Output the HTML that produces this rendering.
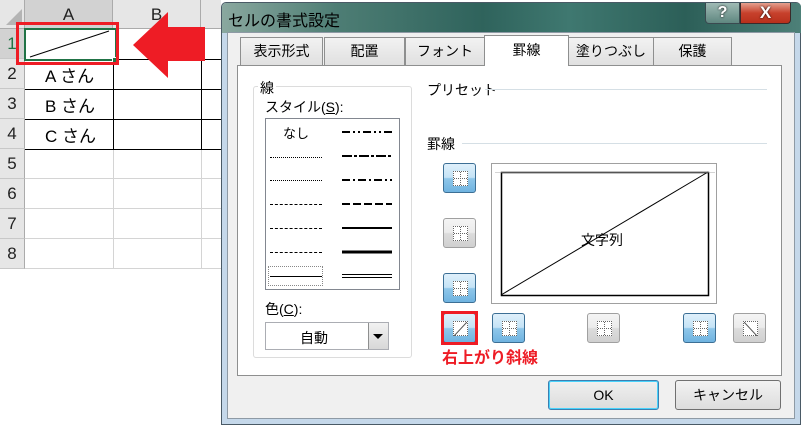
<!DOCTYPE html>
<html><head><meta charset="utf-8"><style>
*{margin:0;padding:0;box-sizing:border-box}
body{width:801px;height:425px;position:relative;overflow:hidden;background:#fff;font-family:"Liberation Sans","Noto Sans CJK JP",sans-serif;color:#000}
.a{position:absolute}
.hl{position:absolute;height:1px;background:#d4d4d4}
.vl{position:absolute;width:1px;background:#d4d4d4}
.rh{position:absolute;left:0;width:25px;height:30px;background:#e6e6e6;border-bottom:1px solid #c8c8c8;border-right:1px solid #ababab;text-align:center;font-size:17px;line-height:30px;color:#222}
.t{position:absolute;font-size:14px}
.tab{position:absolute;top:37px;height:28px;background:linear-gradient(#f2f2f2,#e0e0e0);border:1px solid #8e8f8f;border-bottom:none;font-size:14px;text-align:center;line-height:27px}
.btn{position:absolute;width:33px;height:30px;border:1px solid #3c6f95;border-radius:3px;background:linear-gradient(#dff0fb 0%,#c5e3f6 48%,#8fc7ea 52%,#6fb3e0 100%)}
.btn.g{border-color:#a0a0a0;background:linear-gradient(#f4f4f4 0%,#ebebeb 48%,#dcdcdc 52%,#d0d0d0 100%)}
.btn i{position:absolute;left:9px;top:7px;width:15px;height:15px;border:1px dotted #666;background:#fff}
.btn i::before{content:"";position:absolute;left:6px;top:0;height:13px;border-left:1px dotted #666}
.btn i::after{content:"";position:absolute;top:6px;left:0;width:13px;border-top:1px dotted #666}
.btn i.n::before,.btn i.n::after{display:none}
.ls{position:absolute;height:0}
</style></head><body>
<div class="a" style="left:0;top:0;width:221px;height:29px;background:#e6e6e6;border-bottom:1px solid #ababab"></div>
<div class="a" style="left:0;top:0;width:25px;height:29px;border-right:1px solid #ababab"></div>
<svg class="a" style="left:6px;top:9px" width="16" height="16"><polygon points="16,0 16,16 0,16" fill="#b4b4b4"/></svg>
<div class="a" style="left:25px;top:0;width:88px;height:29px;background:#d2d2d2;border-right:1px solid #ababab;text-align:center;font-size:17px;line-height:30px;color:#222">A</div>
<div class="a" style="left:113px;top:0;width:88px;height:29px;border-right:1px solid #ababab;text-align:center;font-size:17px;line-height:30px;color:#222">B</div>
<div class="rh" style="top:29px;background:#d2d2d2;color:#217346">1</div>
<div class="rh" style="top:59px">2</div><div class="rh" style="top:89px">3</div><div class="rh" style="top:119px">4</div>
<div class="rh" style="top:149px">5</div><div class="rh" style="top:179px">6</div><div class="rh" style="top:209px">7</div><div class="rh" style="top:239px">8</div>
<div class="hl" style="left:25px;top:178px;width:196px"></div>
<div class="hl" style="left:25px;top:208px;width:196px"></div>
<div class="hl" style="left:25px;top:238px;width:196px"></div>
<div class="hl" style="left:25px;top:268px;width:196px"></div>
<div class="vl" style="left:113px;top:149px;height:120px"></div>
<div class="vl" style="left:201px;top:149px;height:120px"></div>
<div class="vl" style="left:201px;top:29px;height:30px"></div>
<div class="a" style="left:25px;top:59px;width:196px;height:91px;border-top:1px solid #000;border-bottom:1px solid #000"></div>
<div class="a" style="left:25px;top:89px;width:196px;height:1px;background:#000"></div>
<div class="a" style="left:25px;top:119px;width:196px;height:1px;background:#000"></div>
<div class="a" style="left:113px;top:59px;width:1px;height:91px;background:#000"></div>
<div class="a" style="left:201px;top:59px;width:1px;height:91px;background:#000"></div>
<div class="t" style="left:45px;top:62px;font-size:17px">A さん</div>
<div class="t" style="left:45px;top:92px;font-size:17px">B さん</div>
<div class="t" style="left:45px;top:122px;font-size:17px">C さん</div>
<svg class="a" style="left:25px;top:29px" width="91" height="32"><line x1="5" y1="28" x2="84" y2="2" stroke="#000" stroke-width="1"/></svg>
<div class="a" style="left:24px;top:28px;width:93px;height:33px;border:2px solid #217346"></div>
<div class="a" style="left:112px;top:57px;width:6px;height:6px;background:#217346;border:1px solid #fff"></div>
<div class="a" style="left:16px;top:22px;width:103px;height:43px;border:3px solid #ee1c25"></div>
<svg class="a" style="left:133px;top:12px" width="72" height="67"><polygon points="0,33 35,0 35,15 72,15 72,49 35,49 35,66" fill="#ee1c25"/></svg>
<div class="a" style="left:221px;top:2px;width:580px;height:423px;background:#c5d8ea;border:1px solid #4a5a66;border-radius:5px 5px 0 0"></div>
<div class="a" style="left:222px;top:3px;width:579px;height:30px;background:linear-gradient(90deg,#8aa89f 0%,#4d7d74 20%,#2f635c 45%,#3f7870 60%,#2c5f58 80%,#4d8078 100%);border-radius:4px 4px 0 0"></div>
<div class="t" style="left:228px;top:7px;font-size:16px;color:#000">セルの書式設定</div>
<div class="a" style="left:705px;top:3px;width:35px;height:21px;border:1px solid #3a4a50;border-top:none;border-radius:0 0 0 4px;background:linear-gradient(#9fbab4,#5f8780);color:#fff;font-weight:bold;text-align:center;font-size:16px;line-height:20px;text-shadow:0 0 2px #000">?</div>
<div class="a" style="left:740px;top:3px;width:51px;height:21px;border:1px solid #3a2a2a;border-top:none;border-radius:0 0 4px 0;background:linear-gradient(#e4a08f,#c7412c 50%,#b8301c);color:#fff;font-weight:bold;text-align:center;font-size:17px;line-height:20px;text-shadow:0 0 2px #000">X</div>
<div class="a" style="left:227px;top:32px;width:568px;height:387px;background:#f0f0f0;border:1px solid #8e9aa5"></div>
<div class="a" style="left:237px;top:65px;width:545px;height:311px;background:#fff;border:1px solid #8e8f8f"></div>
<div class="tab" style="left:240px;width:83px">表示形式</div>
<div class="tab" style="left:324px;width:81px">配置</div>
<div class="tab" style="left:405px;width:80px">フォント</div>
<div class="tab" style="left:484px;top:35px;height:31px;width:85px;background:#fff;line-height:28px">罫線</div>
<div class="tab" style="left:568px;width:86px">塗りつぶし</div>
<div class="tab" style="left:653px;width:79px">保護</div>
<div class="a" style="left:253px;top:86px;width:159px;height:272px;border:1px solid #dcdcdc;border-radius:3px"></div>
<div class="t" style="left:258px;top:78px;background:#fff;padding:0 2px">線</div>
<div class="t" style="left:265px;top:97px">スタイル(<u>S</u>):</div>
<div class="a" style="left:265px;top:118px;width:135px;height:172px;border:1px solid #828790"></div>
<div class="t" style="left:283px;top:123px;font-size:13px">なし</div>
<div class="ls" style="left:270px;top:157px;width:52px;border-top:1px dotted #000"></div>
<div class="ls" style="left:270px;top:180px;width:52px;border-top:1px dotted #000"></div>
<div class="ls" style="left:270px;top:204px;width:52px;border-top:1px dashed #000"></div>
<div class="ls" style="left:270px;top:228px;width:52px;border-top:1px dashed #000"></div>
<div class="ls" style="left:270px;top:252px;width:52px;border-top:1px dashed #000"></div>
<div class="a" style="left:268px;top:266px;width:55px;height:20px;border:1px dotted #888"></div>
<div class="ls" style="left:270px;top:276px;width:52px;border-top:1px solid #000"></div>
<svg class="a" style="left:342px;top:128px" width="52" height="152" stroke="#000">
<line x1="0" y1="4" x2="50" y2="4" stroke-width="2" stroke-dasharray="8,3,2,3,2,3"/>
<line x1="0" y1="28" x2="50" y2="28" stroke-width="2" stroke-dasharray="10,2,3,2"/>
<line x1="0" y1="52" x2="50" y2="52" stroke-width="2" stroke-dasharray="8,3,2,3"/>
<line x1="0" y1="76" x2="50" y2="76" stroke-width="2" stroke-dasharray="8,3"/>
<line x1="0" y1="100" x2="50" y2="100" stroke-width="2"/>
<line x1="0" y1="124" x2="50" y2="124" stroke-width="3"/>
<line x1="0" y1="146.5" x2="50" y2="146.5" stroke-width="1"/>
<line x1="0" y1="149.5" x2="50" y2="149.5" stroke-width="1"/>
</svg>
<div class="t" style="left:265px;top:299px">色(<u>C</u>):</div>
<div class="a" style="left:265px;top:322px;width:124px;height:28px;border:1px solid #abadb3;background:#fff"></div>
<div class="t" style="left:300px;top:328px">自動</div>
<div class="a" style="left:368px;top:323px;width:20px;height:26px;border-left:1px solid #8e8f8f;background:linear-gradient(#f2f2f2,#d8d8d8)"></div>
<svg class="a" style="left:373px;top:334px" width="10" height="6"><polygon points="0,0 10,0 5,5" fill="#000"/></svg>
<div class="t" style="left:427px;top:80px">プリセット</div>
<div class="a" style="left:485px;top:89px;width:282px;height:1px;background:#d5dfe5"></div>
<div class="t" style="left:427px;top:134px">罫線</div>
<div class="a" style="left:462px;top:143px;width:305px;height:1px;background:#d5dfe5"></div>
<div class="btn" style="left:443px;top:163px"><i></i></div>
<div class="btn g" style="left:443px;top:218px"><i></i></div>
<div class="btn" style="left:443px;top:273px"><i></i></div>
<div class="btn" style="left:443px;top:313px"><i class="n"></i><svg class="a" style="left:10px;top:8px" width="13" height="14"><line x1="0" y1="14" x2="13" y2="0" stroke="#555"/></svg></div>
<div class="a" style="left:441px;top:311px;width:37px;height:34px;border:3px solid #ee1c25"></div>
<div class="btn" style="left:492px;top:313px"><i></i></div>
<div class="btn g" style="left:587px;top:313px"><i></i></div>
<div class="btn" style="left:683px;top:313px"><i></i></div>
<div class="btn g" style="left:733px;top:313px"><i class="n"></i><svg class="a" style="left:10px;top:8px" width="13" height="14"><line x1="0" y1="0" x2="13" y2="14" stroke="#555"/></svg></div>
<div class="a" style="left:491px;top:163px;width:226px;height:141px;border:1px solid #a0a0a0;background:#fff"></div>
<svg class="a" style="left:491px;top:163px" width="226" height="141">
<rect x="10.5" y="9.5" width="207" height="123" fill="none" stroke="#000" stroke-width="1.5"/>
<line x1="10" y1="132" x2="217" y2="9" stroke="#000" stroke-width="1"/>
<line x1="4" y1="9.5" x2="224" y2="9.5" stroke="#aaa" stroke-width="0.5"/>
</svg>
<div class="t" style="left:581px;top:230px">文字列</div>
<div class="a" style="left:442px;top:344px;font-size:16px;font-weight:bold;color:#ee1c25">右上がり斜線</div>
<div class="a" style="left:548px;top:380px;width:111px;height:30px;border:1px solid #3c7fb1;border-radius:3px;background:linear-gradient(#f0f0f0,#dcdcdc);box-shadow:inset 0 0 0 1px #48d2fb;text-align:center;line-height:28px;font-size:14px">OK</div>
<div class="a" style="left:675px;top:380px;width:106px;height:30px;border:1px solid #707070;border-radius:3px;background:linear-gradient(#f2f2f2,#dddddd);text-align:center;line-height:28px;font-size:14px">キャンセル</div>
</body></html>
